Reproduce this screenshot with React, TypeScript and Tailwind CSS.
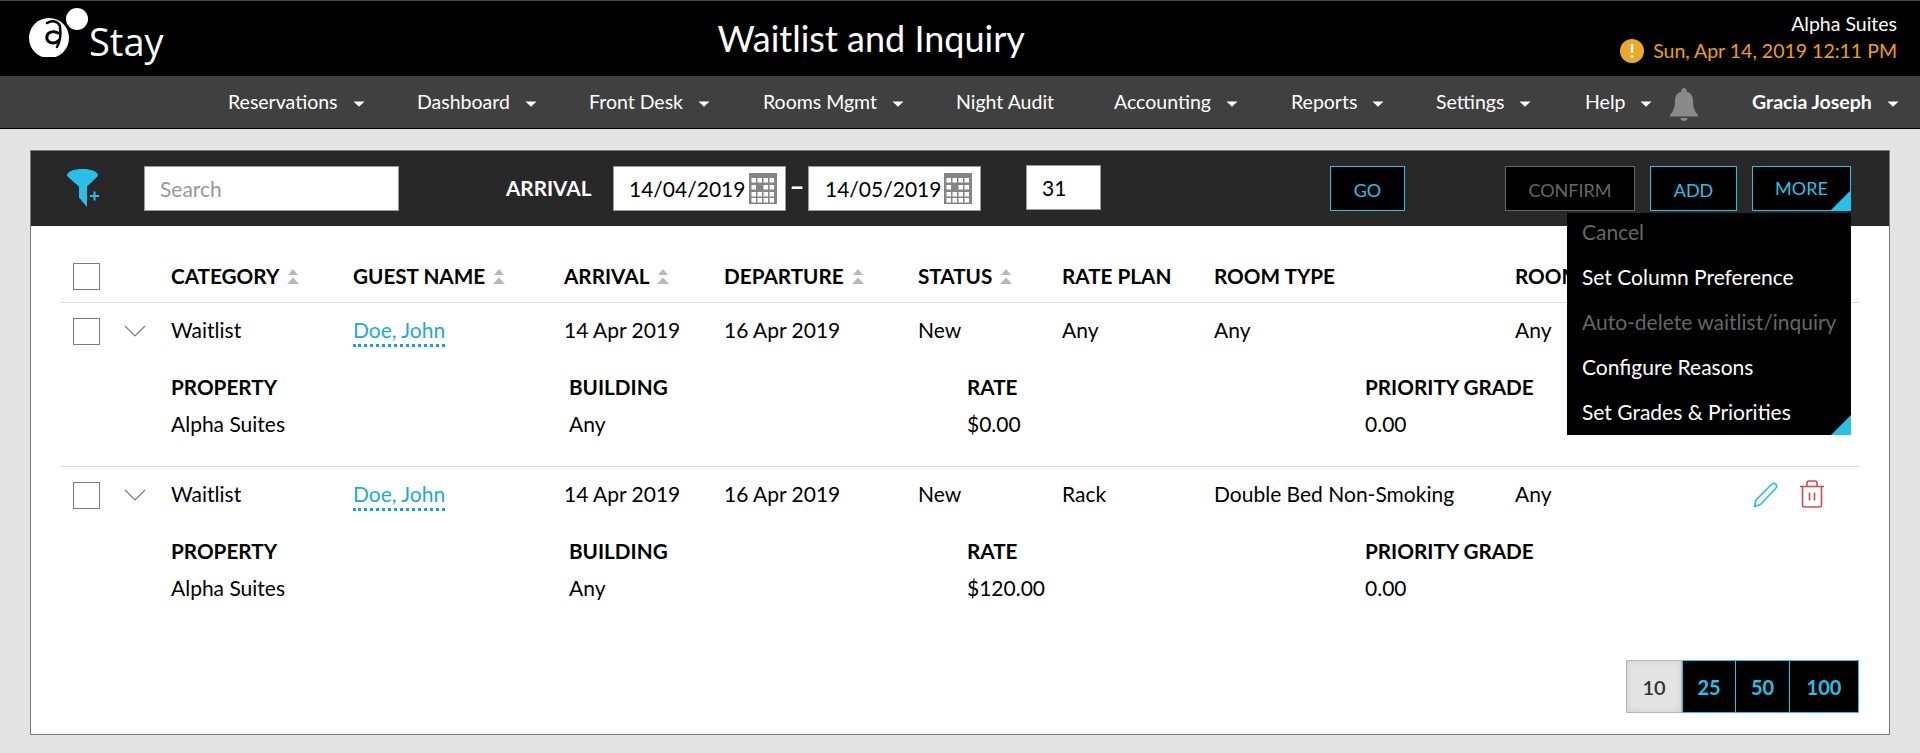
import { Fragment } from 'react';

const navItems = [
  { label: 'Reservations', width: 189, caret: true },
  { label: 'Dashboard', width: 172, caret: true },
  { label: 'Front Desk', width: 174, caret: true },
  { label: 'Rooms Mgmt', width: 193, caret: true },
  { label: 'Night Audit', width: 158, caret: false },
  { label: 'Accounting', width: 177, caret: true },
  { label: 'Reports', width: 145, caret: true },
  { label: 'Settings', width: 149, caret: true },
  { label: 'Help', width: 83, caret: true },
];

const rows = [
  { plan: 'Any', roomType: 'Any', rate: '$0.00' },
  { plan: 'Rack', roomType: 'Double Bed Non-Smoking', rate: '$120.00' },
];

const menuItems = [
  { label: 'Cancel', disabled: true },
  { label: 'Set Column Preference', disabled: false },
  { label: 'Auto-delete waitlist/inquiry', disabled: true },
  { label: 'Configure Reasons', disabled: false },
  { label: 'Set Grades & Priorities', disabled: false },
];

const Caret = () => (
  <svg width="12" height="6" viewBox="0 0 12 6" className="shrink-0 mt-[4px]">
    <path d="M0.5 0.5h11L6 5.8z" fill="#fff" />
  </svg>
);

const SortIcon = () => (
  <svg width="12" height="15" viewBox="0 0 12 15" className="ml-[8px] shrink-0">
    <path d="M6 0l5 6H1zM0 15l6-6.5 6 6.5z" fill="#b8b8b8" />
  </svg>
);

const Logo = () => (
  <svg width="64" height="50" viewBox="27 7 64 50" className="shrink-0">
    <circle cx="49" cy="38" r="20" fill="#fff" />
    <circle cx="77" cy="19" r="11" fill="#fff" />
    <path d="M47 23c5-3 11-2 13 3" fill="none" stroke="#000" strokeWidth="2.500" strokeLinecap="round" />
    <path
      d="M58 33c-3-2-10-2-11 3-1 5 3 7 6 7 2.500 0 4.500-.8 5.500-2.500"
      fill="none"
      stroke="#000"
      strokeWidth="3"
      strokeLinecap="round"
    />
    <path d="M60 27c1 7 1 13-3 20" fill="none" stroke="#000" strokeWidth="2.500" strokeLinecap="round" />
  </svg>
);

const FilterIcon = () => (
  <svg width="32" height="38" viewBox="0 0 32 38" className="shrink-0">
    <path
      d="M0 6.5C0 2.5 7 0 15.5 0S31 2.500 31 6.500c-1 2-11 11-11 11V38l-8-9.500V17.500S1 8.500 0 6.500z"
      fill="#29c0e8"
    />
    <path d="M23 26h9v2h-9zM26.500 22.500h2v9h-2z" fill="#29c0e8" />
  </svg>
);

const CalendarIcon = () => (
  <svg width="28" height="31" viewBox="0 0 28 31" className="shrink-0">
    <rect width="28" height="31" fill="#858585" />
    {[4, 11, 18, 24].map((y) =>
      [2, 8, 14, 20].map((x) => (
        <rect
          key={`${x}-${y}`}
          x={x + 0.5}
          y={y + 1}
          width="4.500"
          height="4.500"
          fill={x === 8 && y === 11 ? '#858585' : '#fff'}
        />
      )),
    )}
  </svg>
);

const Corner = ({ size }: { size: number }) => (
  <svg width={size} height={size} viewBox="0 0 20 20" className="absolute right-0 bottom-0">
    <path d="M20 0v20H0z" fill="#29c0e8" />
  </svg>
);

const Checkbox = () => <div className="w-[27px] h-[27px] border border-[#7b7b7b] bg-white" />;

const Bell = () => (
  <svg width="28" height="33" viewBox="0 0 28 33" className="shrink-0">
    <path
      d="M14 0c1.500 0 2.500 1 2.500 2.500v1c4 1 6.500 4.500 6.500 9 0 6 1 10 5 14.500v1.500H0V27c4-4.500 5-8.500 5-14.500 0-4.500 2.500-8 6.500-9v-1C11.500 1 12.500 0 14 0z"
      fill="#8a8a8a"
    />
    <path d="M10.500 30h7c0 2-1.500 3-3.500 3s-3.500-1-3.500-3z" fill="#8a8a8a" />
  </svg>
);

const EditIcon = () => (
  <svg width="26" height="26" viewBox="0 0 26 26" fill="none" className="shrink-0">
    <path
      d="M1.500 24.500l1.500-6.500L18.500 2.500c1.500-1.500 3-1.500 4.200-.3 1.200 1.200 1.200 2.800-.2 4.300L7.500 22.500z"
      stroke="#29c0e8"
      strokeWidth="1.700"
      strokeLinejoin="round"
    />
  </svg>
);

const TrashIcon = () => (
  <svg width="24" height="28" viewBox="0 0 24 28" fill="none" className="shrink-0 ml-[21px] mt-[-2px]">
    <path
      d="M0 6.500h24M7 6.500V3c0-1 .8-2 2-2h6c1.200 0 2 1 2 2v3.500M2.500 6.500V25c0 1.200.8 2 2 2h15c1.200 0 2-.8 2-2V6.500M9.500 12.500v8M14.500 12.500v8"
      stroke="#d9484f"
      strokeWidth="1.600"
    />
  </svg>
);

const columns = 'grid grid-cols-[110px_182px_211px_160px_194px_144px_152px_301px_1fr]';

const HeadCell = ({ label, sort }: { label: string; sort?: boolean }) => (
  <div className="flex items-center font-bold text-[20.7px] leading-[26px] text-black whitespace-nowrap">
    {label}
    {sort && <SortIcon />}
  </div>
);

const DetailCell = ({ label, value }: { label: string; value: string }) => (
  <div>
    <div className="font-bold text-[20.7px] leading-[24px] text-black">{label}</div>
    <div className="mt-[13px] text-[21px] leading-[24px] text-black">{value}</div>
  </div>
);

export default function App() {
  return (
    <div className="w-[1920px] h-[753px] overflow-hidden bg-[#e4e4e4] font-['Lato',sans-serif]">
      {/* top bar */}
      <div className="h-[76px] bg-black border-t border-[#444] flex items-start text-white">
        <div className="mt-[6px] ml-[27px] flex items-start">
          <Logo />
          <span className="ml-[-2px] mt-[10px] font-['Open_Sans',sans-serif] text-[38px] leading-[48px]">Stay</span>
        </div>
        <h1 className="ml-[554px] mt-[13px] text-[36px] leading-[48px] font-normal">Waitlist and Inquiry</h1>
        <div className="ml-auto mr-[23px] mt-[11px] text-right text-[19.5px]">
          <div className="leading-[24px]">Alpha Suites</div>
          <div className="mt-[3px] flex items-center justify-end text-[#f0a000] leading-[24px]">
            <span className="w-[24px] h-[24px] rounded-full bg-[#e9a92c] flex items-center justify-center font-bold text-white text-[18px] mr-[9px]">
              !
            </span>
            Sun, Apr 14, 2019 12:11 PM
          </div>
        </div>
      </div>

      {/* nav */}
      <div className="h-[53px] bg-[#404040] border-b border-black flex items-center pl-[228px] text-white text-[19.5px]">
        {navItems.map((item) => (
          <div key={item.label} style={{ width: item.width }} className="flex items-center gap-[15px]">
            {item.label}
            {item.caret && <Caret />}
          </div>
        ))}
        <div className="w-[84px] mt-[4px] pl-[2px]">
          <Bell />
        </div>
        <div className="flex items-center gap-[15px] font-bold">
          Gracia Joseph
          <Caret />
        </div>
      </div>

      {/* card */}
      <div className="mx-[30px] mt-[21px] h-[585px] relative border border-[#7b7b7b] bg-white">
        <div className="h-[75px] bg-[#282828] flex items-start pt-[15px] text-[21px]">
          <div className="ml-[36px] mt-[3px]">
            <FilterIcon />
          </div>
          <input
            placeholder="Search"
            className="ml-[45px] w-[255px] h-[45px] bg-white border border-[#999] px-[15px] text-[21px] placeholder:text-[#999] outline-none"
          />
          <div className="ml-[107px] w-[86px] mt-[10px] font-bold text-white text-[20.7px] leading-[24px] whitespace-nowrap">
            ARRIVAL
          </div>
          <div className="ml-[21px] w-[173px] h-[45px] bg-white border border-[#999] flex items-center justify-between pl-[15px] pr-[8px] text-black">
            14/04/2019
            <CalendarIcon />
          </div>
          <div className="w-[22px] mt-[5px] text-center text-white font-black text-[26px] leading-[30px]">–</div>
          <div className="w-[173px] h-[45px] bg-white border border-[#999] flex items-center justify-between pl-[16px] pr-[8px] text-black">
            14/05/2019
            <CalendarIcon />
          </div>
          <div className="ml-[45px] mt-[-1px] w-[75px] h-[45px] bg-white border border-[#999] flex items-center pl-[15px] text-black">
            31
          </div>
          <button className="ml-[229px] w-[75px] h-[45px] pt-[3px] bg-black border border-[#29c0e8] text-[#29c0e8] text-[18px]">
            GO
          </button>
          <button className="ml-[100px] w-[130px] h-[45px] pt-[3px] bg-black border border-[#666] text-[#666] text-[18px]">
            CONFIRM
          </button>
          <button className="ml-[15px] w-[87px] h-[45px] pt-[3px] bg-black border border-[#29c0e8] text-[#29c0e8] text-[18px]">
            ADD
          </button>
          <button className="relative ml-[15px] w-[99px] h-[45px] bg-black border border-[#29c0e8] text-[#29c0e8] text-[18px]">
            MORE
            <Corner size={19} />
          </button>
        </div>

        <div className="px-[30px]">
          <div className={`${columns} content-start h-[77px] pt-[36px] border-b border-[#dcdcdc]`}>
            <div className="pl-[12px] pt-[1px]">
              <Checkbox />
            </div>
            <HeadCell label="CATEGORY" sort />
            <HeadCell label="GUEST NAME" sort />
            <HeadCell label="ARRIVAL" sort />
            <HeadCell label="DEPARTURE" sort />
            <HeadCell label="STATUS" sort />
            <HeadCell label="RATE PLAN" />
            <HeadCell label="ROOM TYPE" />
            <HeadCell label="ROOM" />
          </div>

          {rows.map((row, i) => (
            <Fragment key={i}>
              <div className={`h-[164px] pt-[15px] ${i === 0 ? 'border-b border-[#dcdcdc]' : ''}`}>
                <div className={`${columns} text-[21px] leading-[23px] text-black`}>
                  <div className="pl-[12px] flex items-start gap-[24px]">
                    <Checkbox />
                    <svg width="22" height="12" viewBox="0 0 22 12" fill="none" className="shrink-0 mt-[7px]">
                      <path d="M1 1l10 10L21 1" stroke="#777" strokeWidth="1.100" />
                    </svg>
                  </div>
                  <div>Waitlist</div>
                  <div>
                    <span className="text-[#1eaad6] border-b-[3px] border-dotted border-[#0aa7d4] pb-[2px]">Doe, John</span>
                  </div>
                  <div>14 Apr 2019</div>
                  <div>16 Apr 2019</div>
                  <div>New</div>
                  <div>{row.plan}</div>
                  <div className="whitespace-nowrap">{row.roomType}</div>
                  <div className="flex items-start">
                    <div className="w-[238px]">Any</div>
                    <EditIcon />
                    <TrashIcon />
                  </div>
                </div>
                <div className="mt-[30px] pl-[110px] grid grid-cols-[398px_398px_398px_1fr]">
                  <DetailCell label="PROPERTY" value="Alpha Suites" />
                  <DetailCell label="BUILDING" value="Any" />
                  <DetailCell label="RATE" value={row.rate} />
                  <DetailCell label="PRIORITY GRADE" value="0.00" />
                </div>
              </div>
            </Fragment>
          ))}

          <div className="mt-[29px] flex justify-end text-[20px] font-bold">
            <div className="w-[56px] h-[53px] flex items-center justify-center bg-[#e4e4e4] border border-[#b5b5b5] text-[#333] font-semibold shadow-[inset_0_0_6px_rgba(0,0,0,0.1)]">
              10
            </div>
            <div className="w-[54px] h-[53px] flex items-center justify-center bg-black border border-[#29c0e8] text-[#29c0e8]">
              25
            </div>
            <div className="w-[54px] h-[53px] flex items-center justify-center bg-black border-y border-r border-[#29c0e8] text-[#29c0e8]">
              50
            </div>
            <div className="w-[69px] h-[53px] flex items-center justify-center bg-black border-y border-r border-[#29c0e8] text-[#29c0e8]">
              100
            </div>
          </div>
        </div>

        {/* MORE dropdown */}
        <div className="absolute right-[38px] top-[62px] w-[284px] h-[222px] bg-black pl-[15px] text-[21px]">
          {menuItems.map((item) => (
            <div
              key={item.label}
              className={`h-[45px] leading-[38px] whitespace-nowrap ${item.disabled ? 'text-[#666]' : 'text-white'}`}
            >
              {item.label}
            </div>
          ))}
          <Corner size={20} />
        </div>
      </div>
    </div>
  );
}
